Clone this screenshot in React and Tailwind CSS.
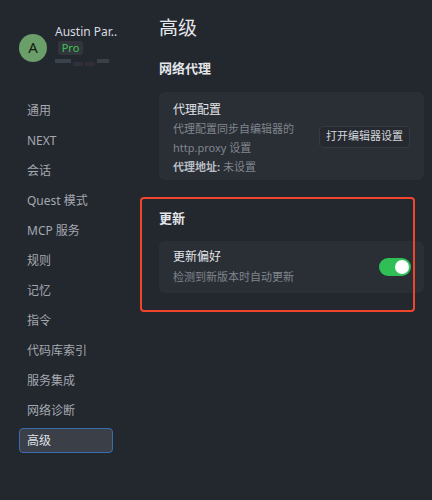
import React from 'react';

const navItems = [
  '通用',
  'NEXT',
  '会话',
  'Quest 模式',
  'MCP 服务',
  '规则',
  '记忆',
  '指令',
  '代码库索引',
  '服务集成',
  '网络诊断',
  '高级',
];

function Toggle({ on }) {
  return (
    <div
      className={
        'w-[32px] h-[18px] rounded-full flex items-center px-[2px] ' +
        (on ? 'bg-[#2fbf55] justify-end' : 'bg-[#4a4e56] justify-start')
      }
    >
      <div className="w-[14px] h-[14px] rounded-full bg-white" />
    </div>
  );
}

export default function App() {
  return (
    <div
      className="relative w-[432px] h-[500px] bg-[#23272e] flex overflow-hidden"
      style={{ fontFamily: '"Noto Sans", "Noto Sans CJK SC", sans-serif' }}
    >
      <aside className="w-[140px] shrink-0 pl-[19px] pr-[27px]">
        <div className="flex items-center gap-[8px] pt-[29px]">
          <div className="w-[28px] h-[28px] rounded-full bg-[#6a9f69] flex items-center justify-center text-[15px] text-[#161a17] shrink-0">
            A
          </div>
          <div className="flex flex-col -mt-[4px]">
            <span className="text-[12px] leading-[14px] text-[#d8dbe0] whitespace-nowrap">Austin Par..</span>
            <span className="mt-[2px] ml-[3px] w-[25px] h-[14px] rounded-[3px] bg-[#32363c] text-[#3ec24f] text-[11px] leading-[14px] text-center">
              Pro
            </span>
            <div className="mt-[4px] flex gap-[2px] opacity-60">
              <div className="w-[16px] h-[4px] bg-[#4a5560]" />
              <div className="w-[10px] h-[4px] bg-[#383a4a] mt-[3px]" />
              <div className="w-[10px] h-[4px] bg-[#3c3438] mt-[3px]" />
              <div className="w-[12px] h-[4px] bg-[#4b5058]" />
            </div>
          </div>
        </div>
        <nav className="mt-[32px] flex flex-col gap-[5px]">
          {navItems.map((item) => {
            const active = item === '高级';
            return (
              <div
                key={item}
                className={
                  'h-[25px] flex items-center px-[7px] rounded-[4px] text-[12px] whitespace-nowrap ' +
                  (active
                    ? 'bg-[#3b3f48] border border-[#3a6cb0] text-[#dfe2e6]'
                    : 'border border-transparent text-[#a3a9b1]')
                }
              >
                {item}
              </div>
            );
          })}
        </nav>
      </aside>

      <main className="flex-1 pl-[19px] pr-[8px]">
        <h1 className="mt-[15px] text-[19px] leading-[26px] text-[#e6e8eb]">高级</h1>

        <h2 className="mt-[18px] text-[13px] leading-[18px] font-bold text-[#e2e5e9]">网络代理</h2>
        <div className="mt-[15px] bg-[#2a2e35] rounded-[6px] pl-[14px] pr-[14px] pt-[9px] pb-[4px] flex items-center justify-between">
          <div className="flex flex-col">
            <span className="text-[12px] leading-[18px] text-[#e2e5e9]">代理配置</span>
            <span className="text-[11px] leading-[19px] text-[#80868e]">代理配置同步自编辑器的</span>
            <span className="text-[11px] leading-[19px] text-[#80868e]">http.proxy 设置</span>
            <span className="text-[11px] leading-[19px] text-[#80868e]">
              <span className="font-bold text-[#b8bcc3]">代理地址:</span> 未设置
            </span>
          </div>
          <button className="mt-[-4px] h-[22px] px-[6px] rounded-[4px] border border-[#363a41] bg-[#262a30] text-[11px] text-[#d3d7dc] whitespace-nowrap">
            打开编辑器设置
          </button>
        </div>

        <h2 className="mt-[29px] text-[13px] leading-[18px] font-bold text-[#e2e5e9]">更新</h2>
        <div className="mt-[14px] bg-[#2a2e35] rounded-[6px] pl-[14px] pr-[13px] pt-[7px] pb-[7px] flex items-center justify-between">
          <div className="flex flex-col">
            <span className="text-[12px] leading-[18px] text-[#e2e5e9]">更新偏好</span>
            <span className="mt-[2px] text-[11px] leading-[18px] text-[#80868e]">检测到新版本时自动更新</span>
          </div>
          <Toggle on />
        </div>
      </main>

      <div className="absolute left-[140px] top-[197px] w-[275px] h-[115px] border-2 border-[#f0452d] rounded-[4px] pointer-events-none" />
    </div>
  );
}
